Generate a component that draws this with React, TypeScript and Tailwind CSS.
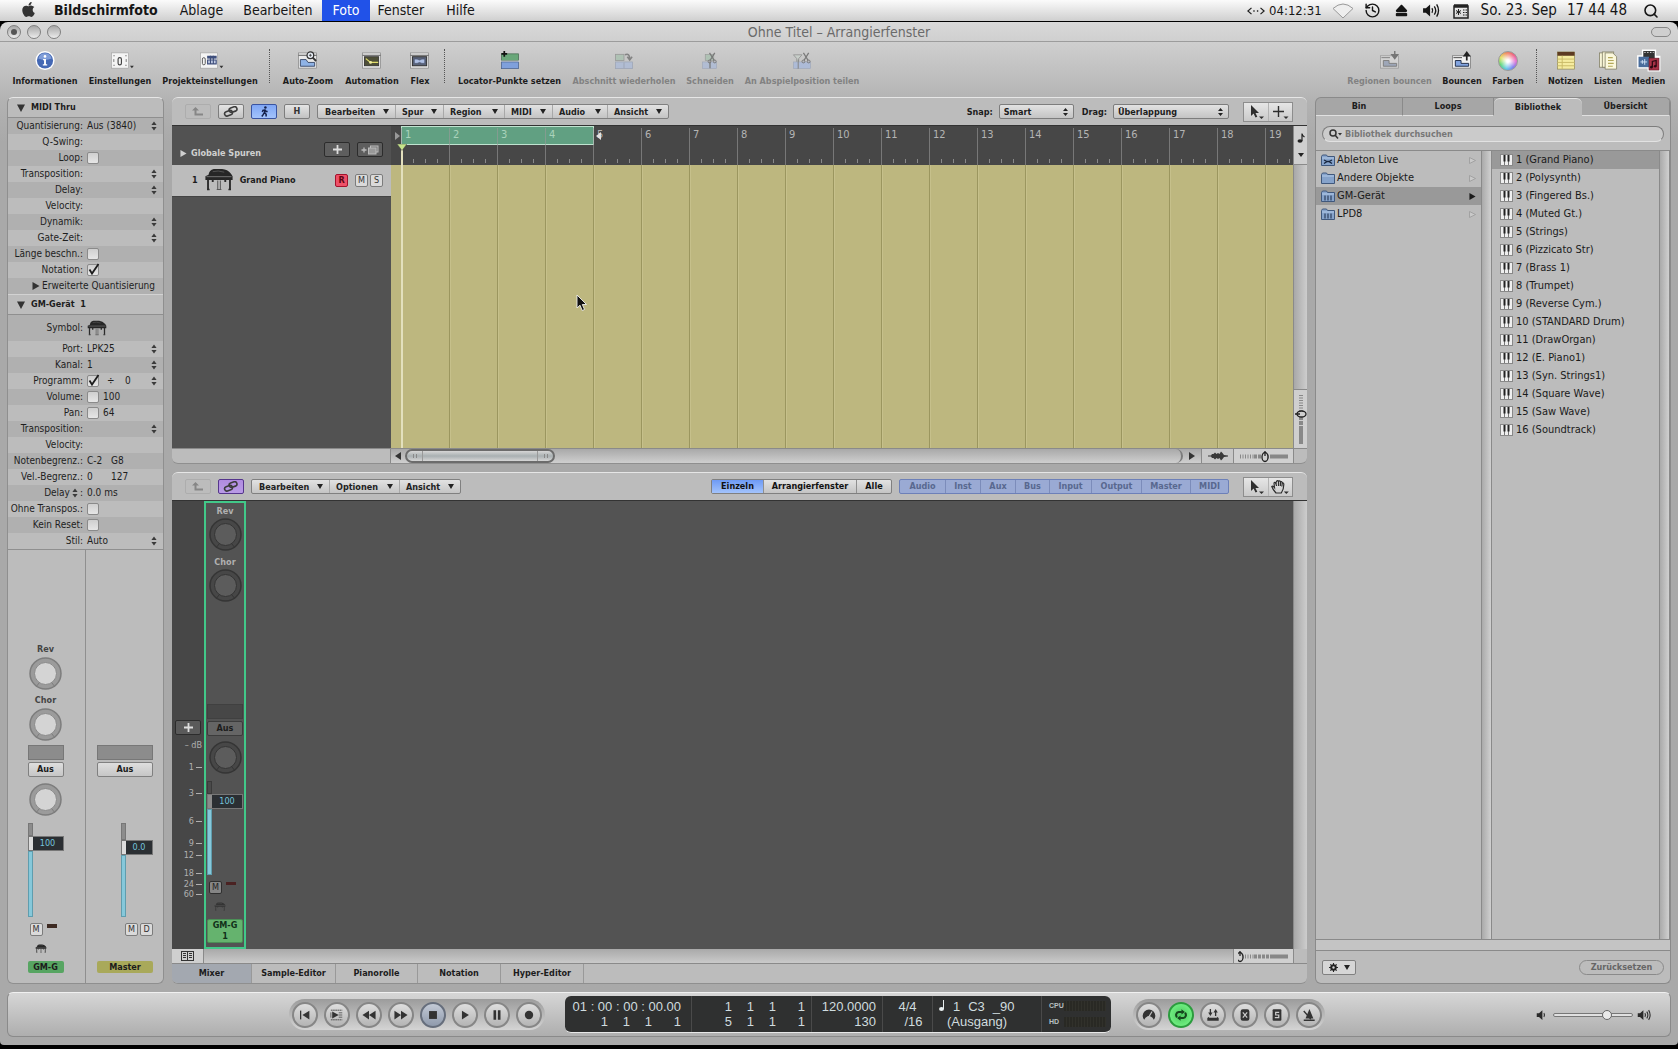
import React from 'react';
import { FaApple, FaEject } from 'react-icons/fa';
import { History, Search } from 'lucide-react';

/* ---------- small glyphs ---------- */

function Updown({ className = '' }: { className?: string }) {
  return (
    <svg viewBox="0 0 6 10" className={`h-2.5 w-1.5 shrink-0 ${className}`} fill="#3a3a3a" aria-hidden="true">
      <path d="M3 .5 5.600 4H.4zM3 9.500.4 6h5.200z" />
    </svg>
  );
}

function Piano({ className = '' }: { className?: string }) {
  return (
    <svg viewBox="0 0 28 22" className={`shrink-0 ${className}`} aria-hidden="true">
      <path d="M4 6.500Q4.500 2 9 1h8q5 .3 8.500 4.500L27 8v3.500H1V8z" fill="#262626" />
      <path d="M8 3.500q5-1.500 11 .5" stroke="#5a5a5a" strokeWidth=".8" fill="none" />
      <path d="M2 8.300h24" stroke="#777" strokeWidth=".9" />
      <path d="M3.500 11v9M24.500 11v9M8 11v2.500M20 11v2.500" stroke="#2b2b2b" strokeWidth="1.800" />
      <path d="M2.500 20.500h2.500M23 20.500h2.500" stroke="#2b2b2b" strokeWidth="1.500" />
      <path d="M12.800 12v8.500M15.300 12v8.500M11.800 20.500h4.500" stroke="#5a5a5a" strokeWidth="1" />
    </svg>
  );
}

function Triangle({ dir, className = '' }: { dir: 'down' | 'right'; className?: string }) {
  return (
    <svg viewBox="0 0 8 8" className={`size-2 shrink-0 ${className}`} fill="currentColor" aria-hidden="true">
      <path d={dir === 'down' ? 'M0 .5h8L4 8z' : 'M.5 0v8L7.500 4z'} />
    </svg>
  );
}

function Speaker({ waves, className = '' }: { waves: number; className?: string }) {
  return (
    <svg viewBox="0 0 20 16" className={`shrink-0 ${className}`} fill="none" stroke="currentColor" strokeWidth="1.400" aria-hidden="true">
      <path d="M1 5.500h3L8.500 1.500v13L4 10.500H1z" fill="currentColor" stroke="none" />
      <path d="M10.500 5.500q1.600 2.500 0 5" />
      {waves > 1 && <path d="M13 3.500q3 4.500 0 9" />}
      {waves > 2 && <path d="M15.500 1.500q4 6.500 0 13" />}
    </svg>
  );
}

function LinkGlyph() {
  return (
    <svg viewBox="0 0 16 11" className="h-[11px] w-4" fill="none" stroke="#3c3c3c" strokeWidth="1.600" aria-hidden="true">
      <rect x="6" y="1.300" width="8" height="4.500" rx="2.200" transform="rotate(-18 10 3.500)" />
      <rect x="1.500" y="5" width="8" height="4.500" rx="2.200" transform="rotate(-18 5.500 7.200)" />
    </svg>
  );
}

function UpGlyph() {
  return (
    <svg viewBox="0 0 12 9" className="h-[9px] w-3" fill="#868686" aria-hidden="true">
      <path d="M3.500 0 7 3.500H4.500V6.500H11V8.500H2.500V3.500H0z" />
    </svg>
  );
}

function Runner() {
  return (
    <svg viewBox="0 0 10 12" className="h-[11px] w-[9px]" fill="none" stroke="#14204a" strokeWidth="1.700" aria-hidden="true">
      <circle cx="6" cy="1.500" r="1.400" fill="#14204a" stroke="none" />
      <path d="M5.500 3.500 5 7l1.800 2v2.500M5 7 3.500 9.500 2 11.500M2.500 6.500l1-2h2.200L7 6h1.500" />
    </svg>
  );
}

function Pointer() {
  return (
    <svg viewBox="0 0 16 16" className="size-4" fill="#2e2e2e" aria-hidden="true">
      <path d="M3 1v11l2.600-2.400L7.500 13.500l1.800-.8L7.500 9H11z" />
      <path d="M11 12.500h5L13.500 15z" />
    </svg>
  );
}

function CrossTool() {
  return (
    <svg viewBox="0 0 18 16" className="h-4 w-[18px]" aria-hidden="true">
      <path d="M7.500 2v11M2 7.500h11" stroke="#2e2e2e" strokeWidth="1.400" />
      <path d="M12.500 12.500h5L15 15z" fill="#2e2e2e" />
    </svg>
  );
}

function HandTool() {
  return (
    <svg viewBox="0 0 18 16" className="h-4 w-[18px]" fill="none" stroke="#2e2e2e" strokeWidth="1.200" aria-hidden="true">
      <path d="M5 14Q1.500 10 .8 7.500q1-1 2.700 1.200L3 4q.8-1.400 1.800.2L5.500 2.500Q6.500.8 7.500 2.500q1-1.400 2 .3Q11 2 11.300 4q1.500-.5 1.500 1.500 0 5-2.500 8.500z" />
      <path d="M4.900 4l.6 3M7.500 2.500V7M9.500 3 9.300 7M11.300 4l-.5 3.500" />
      <path d="M12.800 12.500h5L15.300 15z" fill="#2e2e2e" stroke="none" />
    </svg>
  );
}

/* ---------- toolbar icons ---------- */

const Frame = ({ children }: { children?: React.ReactNode }) => (
  <>
    <rect x="1" y="2" width="19" height="16" fill="#e9e9e9" stroke="#8a8a8a" strokeWidth=".8" />
    <path d="M1 4.500h19" stroke="#555" />
    {children}
  </>
);

const toolbarIcons: Record<string, React.ReactNode> = {
  info: (
    <>
      <circle cx="11" cy="10" r="10" fill="#fff" />
      <circle cx="11" cy="10" r="8.500" fill="#4468b4" />
      <path d="M4 8a7.200 7.200 0 0 1 14 0q-7 3-14 0z" fill="#7f9dd8" />
      <circle cx="11" cy="5.700" r="1.400" fill="#fff" />
      <path d="M9 8.500h3v5.500h1.300v1.200H8.700V14H10V9.700H9z" fill="#fff" />
    </>
  ),
  settings: (
    <>
      <rect x="2" y="2" width="18" height="16" fill="#f4f4f4" stroke="#999" strokeWidth=".6" />
      <rect x="9" y="7" width="3.500" height="7.500" rx="1.700" fill="none" stroke="#444" strokeWidth="1.200" />
      <path d="M4 5h1.500M4 15h1.500M16.500 5H18M16.500 15H18M4.500 8.500v3M17.500 8.500v3" stroke="#777" />
      <path d="M21.500 15.500h4l-2 2.500z" fill="#333" />
    </>
  ),
  project: (
    <>
      <rect x="1" y="2" width="18" height="16" fill="#f4f4f4" stroke="#999" strokeWidth=".6" />
      <rect x="3" y="7" width="3" height="7.500" rx="1.500" fill="none" stroke="#555" />
      <path d="M8 5h10v3H8z" fill="#3f4f7c" />
      <path d="M8.500 9.500h9v4h-9zM11.500 5v9M14.500 5v9" stroke="#3f4f7c" strokeWidth="1.200" fill="#c3cde6" />
      <path d="M21 15.500h4L23 18z" fill="#333" />
    </>
  ),
  zoom: (
    <Frame>
      <path d="M3 16V9h6l2 3h7v4z" fill="#8fb3e6" stroke="#3c4c6c" />
      <circle cx="13.500" cy="4.500" r="3.500" fill="#e8eef6" stroke="#333" strokeWidth="1.300" />
      <path d="m16 7 3.500 3.500" stroke="#333" strokeWidth="2" />
      <path d="M12 4.500h3M13.500 3v3" stroke="#333" strokeWidth=".8" />
    </Frame>
  ),
  automation: (
    <Frame>
      <rect x="3" y="6" width="15" height="9.500" fill="#4e4f38" stroke="#2d2d2d" strokeWidth=".8" />
      <path d="m4.500 8 5 4h8" stroke="#e2df6a" fill="none" strokeWidth="1.300" />
      <circle cx="9.500" cy="12" r="1.500" fill="#f3f0a0" />
    </Frame>
  ),
  flex: (
    <Frame>
      <rect x="3" y="6" width="15" height="9.500" fill="#5a6379" stroke="#2d2d2d" strokeWidth="1" />
      <path d="M5 8.500h3l2.500 1 2.500-1h3v4.500h-3l-2.500-1-2.500 1H5z" fill="#aebfe3" stroke="#39435b" strokeWidth=".6" />
    </Frame>
  ),
  locator: (
    <>
      <rect x="2" y="3" width="18" height="7" fill="#69a779" stroke="#4b6f56" strokeWidth=".8" />
      <path d="M1 10.700h20" stroke="#eee" />
      <rect x="2" y="11.500" width="18" height="7" fill="#7fa0dc" stroke="#4d648f" strokeWidth=".8" />
      <path d="M5 0v6M2 3h6" stroke="#111" strokeWidth="1.800" />
    </>
  ),
  repeat: (
    <g opacity=".6">
      <rect x="2" y="3.500" width="9" height="6.500" fill="#9fbfa8" stroke="#777" strokeWidth=".8" />
      <rect x="2" y="11.500" width="18" height="7" fill="#a6b9de" stroke="#8592ac" strokeWidth=".8" />
      <path d="M11 12v6" stroke="#8592ac" />
      <path d="M12 4q5-2 5 4M14.500 6 17 9.500 19.500 6" fill="none" stroke="#555" strokeWidth="1.600" />
    </g>
  ),
  cut: (
    <g opacity=".6">
      <rect x="6" y="3.500" width="9" height="6.500" fill="#9fbfa8" stroke="#777" strokeWidth=".6" />
      <rect x="3" y="11.500" width="15" height="7" fill="#a6b9de" stroke="#8592ac" strokeWidth=".6" />
      <path d="m10.500 2 5 8M16 2l-5 8M11 11v7" stroke="#444" strokeWidth="1.300" />
      <circle cx="10.500" cy="11" r="1.500" fill="none" stroke="#444" />
      <circle cx="16" cy="11" r="1.500" fill="none" stroke="#444" />
    </g>
  ),
  split: (
    <g opacity=".6">
      <path d="M2 4h9L7.500 8v10h-2V8z" fill="#c9d4cc" stroke="#666" strokeWidth=".8" />
      <rect x="2" y="11.500" width="18" height="7" fill="#9fb6e4" stroke="#8592ac" strokeWidth=".6" />
      <path d="M7 9v9.500" stroke="#555" />
      <path d="m12.500 2 5 8M18 2l-5 8" stroke="#444" strokeWidth="1.300" />
      <circle cx="12.500" cy="11" r="1.500" fill="none" stroke="#444" />
      <circle cx="18" cy="11" r="1.500" fill="none" stroke="#444" />
    </g>
  ),
  bounceRegion: (
    <g opacity=".55">
      <rect x="1" y="5" width="19" height="13" fill="#ddd" stroke="#777" strokeWidth=".8" />
      <path d="M2 7h9" stroke="#444" />
      <path d="M4 16v-6h6v3h8v3z" fill="#7f8fae" stroke="#444" />
      <path d="M16 0v6M13 4l3 4 3-4z" stroke="#333" strokeWidth="1.500" fill="#333" />
    </g>
  ),
  bounce: (
    <>
      <rect x="1" y="5" width="19" height="13" fill="#f0f0f0" stroke="#777" strokeWidth=".8" />
      <path d="M2 7h9" stroke="#444" />
      <path d="M4 16v-6h6v3h8v3z" fill="#82a4e0" stroke="#1f2c49" />
      <path d="M16 4v6M13.500 5 16 1.500 18.500 5z" stroke="#222" strokeWidth="1.800" fill="#222" />
    </>
  ),
  notes: (
    <>
      <rect x="2" y="1" width="18" height="18" fill="#f5eca0" stroke="#8b8452" strokeWidth=".7" />
      <rect x="2" y="1" width="18" height="4" fill="#5d3b22" />
      <path d="M2 8.500h18M2 12h18M2 15.500h18M7 5v14" stroke="#c9bb67" />
    </>
  ),
  lists: (
    <>
      <rect x="2" y="2" width="12" height="15" fill="#f7f4d6" stroke="#7e7b62" strokeWidth=".8" />
      <rect x="5" y="1" width="12" height="16" fill="#f7f4d6" stroke="#7e7b62" strokeWidth=".8" />
      <path d="M8 2h8l4 4v13H8z" fill="#fbf8dc" stroke="#7e7b62" strokeWidth=".8" />
      <path d="M11 7h5M11 10h6M11 13h6M11 16h5" stroke="#b3a85a" strokeWidth="1.200" />
    </>
  ),
  media: (
    <>
      <path d="M3.500-1.500h15V5H23v16.500H9.500V18.500H-1.500V4.500h5z" fill="#fff" />
      <rect x="5" y="0" width="12" height="8" fill="#333" />
      <path d="M6 1.500h10" stroke="#ddd" strokeDasharray="1.500 1.500" />
      <rect x="0" y="6" width="11" height="11" fill="#4a6d9c" />
      <path d="M2 11.500h7M4 9.500v4M6.500 8.500v6" stroke="#cfe0f5" />
      <rect x="11" y="7.500" width="10.500" height="12.500" fill="#a83246" stroke="#5c1522" strokeWidth=".6" />
      <path d="M14.500 17v-6l4-1v6" stroke="#2a0a12" fill="none" strokeWidth="1.300" />
      <circle cx="13.500" cy="17" r="1.400" fill="#2a0a12" />
      <circle cx="17.500" cy="16" r="1.400" fill="#2a0a12" />
    </>
  ),
};

type Tool = { icon: string; label: string; w: string; off?: boolean };

const toolsLeft: (Tool | string)[] = [
  { icon: 'info', label: 'Informationen', w: 'w-[76px]' },
  { icon: 'settings', label: 'Einstellungen', w: 'w-[74px]' },
  { icon: 'project', label: 'Projekteinstellungen', w: 'w-[106px]' },
  'w-[13px]',
  { icon: 'zoom', label: 'Auto-Zoom', w: 'w-16' },
  { icon: 'automation', label: 'Automation', w: 'w-16' },
  { icon: 'flex', label: 'Flex', w: 'w-8' },
  'w-4',
  { icon: 'locator', label: 'Locator-Punkte setzen', w: 'w-[115px]' },
  { icon: 'repeat', label: 'Abschnitt wiederholen', w: 'w-[114px]', off: true },
  { icon: 'cut', label: 'Schneiden', w: 'w-[58px]', off: true },
  { icon: 'split', label: 'An Abspielposition teilen', w: 'w-[126px]', off: true },
];

const toolsRight: (Tool | string)[] = [
  { icon: 'bounceRegion', label: 'Regionen bouncen', w: 'w-[97px]', off: true },
  { icon: 'bounce', label: 'Bouncen', w: 'w-12' },
  { icon: 'colors', label: 'Farben', w: 'w-11' },
  'w-3',
  { icon: 'notes', label: 'Notizen', w: 'w-[47px]' },
  { icon: 'lists', label: 'Listen', w: 'w-[38px]' },
  { icon: 'media', label: 'Medien', w: 'w-[43px]' },
];

function ToolGroup({ items }: { items: (Tool | string)[] }) {
  return (
    <div className="flex">
      {items.map((t, i) =>
        typeof t === 'string' ? (
          <div key={i} className={`${t} flex justify-center`}>
            <div className="h-[34px] border-l border-dotted border-[#555]" />
          </div>
        ) : (
          <button
            key={t.label}
            type="button"
            disabled={t.off}
            className={`${t.w} flex flex-col items-center gap-1 pt-0.5 text-[9px] leading-3 font-bold whitespace-nowrap ${t.off ? 'text-[#828282]' : 'text-[#1c1c1c]'}`}
          >
            {t.icon === 'colors' ? (
              <span className="size-5 rounded-full border border-[#999] bg-[radial-gradient(circle,#fff_10%,transparent_65%),conic-gradient(from_90deg,#e66fd0,#7c7df0,#5fc8e8,#62d87c,#e2e266,#f08b5e,#f0627e,#e66fd0)]" />
            ) : (
              <svg viewBox="0 0 22 21" className="h-5 w-[22px] overflow-visible" aria-hidden="true">
                {toolbarIcons[t.icon]}
              </svg>
            )}
            {t.label}
          </button>
        ),
      )}
    </div>
  );
}

/* ---------- shared controls ---------- */

function MenuStrip({ label, items }: { label: string; items: [string, string][] }) {
  return (
    <div role="menubar" aria-label={label} className="flex h-[15px] rounded-xs border border-[#808080] bg-linear-to-b from-[#e2e2e2] to-[#c4c4c4]">
      {items.map(([t, w], i) => (
        <button
          key={t}
          type="button"
          className={`${w} flex items-center justify-between pr-1.5 text-[9px] leading-3 font-bold text-[#222] ${i ? 'border-l border-[#a8a8a8] pl-1.5' : 'pl-[7px]'}`}
        >
          {t}
          <svg viewBox="0 0 6 5" className="h-[5px] w-1.5" fill="#222" aria-hidden="true">
            <path d="M0 0h6L3 5z" />
          </svg>
        </button>
      ))}
    </div>
  );
}

function SmallButton({ label, tone = 'plain', children }: { label: string; tone?: 'plain' | 'off' | 'blue' | 'violet'; children: React.ReactNode }) {
  const tones = {
    plain: 'border-[#7d7d7d] bg-linear-to-b from-[#e4e4e4] to-[#c2c2c2]',
    off: 'border-[#adadad]',
    blue: 'border-[#3a54a0] bg-linear-to-b from-[#7fa6f5] to-[#a3c3fb]',
    violet: 'border-[#55358c] bg-linear-to-b from-[#b08be0] to-[#b99be6]',
  };
  return (
    <button type="button" aria-label={label} className={`flex h-[15px] w-[26px] items-center justify-center rounded-xs border text-[9px] font-bold text-[#333] ${tones[tone]}`}>
      {children}
    </button>
  );
}

function HeaderSelect({ id, label, value, width }: { id: string; label: string; value: string; width: string }) {
  return (
    <div className="flex items-center gap-1.5">
      <label htmlFor={id} className="text-[9px] leading-3 font-bold text-[#1c1c1c]">{label}</label>
      <div className={`relative ${width}`}>
        <select id={id} className="block h-[15px] w-full appearance-none rounded-xs border border-[#7d7d7d] bg-linear-to-b from-[#e2e2e2] to-[#c4c4c4] pl-1 text-[9px] leading-3 font-bold text-[#1c1c1c]">
          <option>{value}</option>
        </select>
        <svg viewBox="0 0 5 8" className="pointer-events-none absolute top-1 right-1.5 h-2 w-[5px]" fill="#222" aria-hidden="true">
          <path d="M2.500 0 5 3H0zM2.500 8 0 5h5z" />
        </svg>
      </div>
    </div>
  );
}

function ToolPair({ second }: { second: 'cross' | 'hand' }) {
  return (
    <div className="flex h-5 w-[50px] border border-[#8d8d8d] bg-linear-to-b from-[#e6e6e6] to-[#c9c9c9]">
      <button type="button" aria-label="Zeigerwerkzeug" className="flex flex-1 items-center justify-center border-r border-[#b3b3b3]"><Pointer /></button>
      <button type="button" aria-label="Zweites Werkzeug" className="flex flex-1 items-center justify-center">
        {second === 'cross' ? <CrossTool /> : <HandTool />}
      </button>
    </div>
  );
}

function Check({ id, checked = false }: { id: string; checked?: boolean }) {
  return (
    <span className="relative block size-3 shrink-0">
      <input id={id} type="checkbox" defaultChecked={checked} className="peer block size-3 appearance-none rounded-xs border border-[#8a8a8a] bg-linear-to-b from-[#cfcfcf] to-[#e6e6e6]" />
      <svg viewBox="0 0 12 12" className="pointer-events-none absolute inset-0 hidden size-3 overflow-visible peer-checked:block" fill="none" stroke="#1c1c1c" strokeWidth="1.800" aria-hidden="true">
        <path d="m2.500 5.500 2.500 4L11.500 0" />
      </svg>
    </span>
  );
}

/* ---------- inspector ---------- */

type Param = { label: string; value?: string; second?: string; check?: boolean; spin?: boolean; tall?: boolean; labelSpin?: boolean };

const midiParams: Param[] = [
  { label: 'Quantisierung', value: 'Aus (3840)', spin: true },
  { label: 'Q-Swing' },
  { label: 'Loop', check: false },
  { label: 'Transposition', spin: true },
  { label: 'Delay', spin: true },
  { label: 'Velocity' },
  { label: 'Dynamik', spin: true },
  { label: 'Gate-Zeit', spin: true },
  { label: 'Länge beschn.', check: false },
  { label: 'Notation', check: true },
];

const deviceParams: Param[] = [
  { label: 'Symbol', tall: true },
  { label: 'Port', value: 'LPK25', spin: true },
  { label: 'Kanal', value: '1', spin: true },
  { label: 'Programm', check: true, value: '÷', second: '0', spin: true },
  { label: 'Volume', check: false, value: '100' },
  { label: 'Pan', check: false, value: '64' },
  { label: 'Transposition', spin: true },
  { label: 'Velocity' },
  { label: 'Notenbegrenz.', value: 'C-2', second: 'G8' },
  { label: 'Vel.-Begrenz.', value: '0', second: '127' },
  { label: 'Delay', value: '0.0 ms', labelSpin: true },
  { label: 'Ohne Transpos.', check: false },
  { label: 'Kein Reset', check: false },
  { label: 'Stil', value: 'Auto', spin: true },
];

function ParamRows({ rows, group }: { rows: Param[]; group: string }) {
  return (
    <>
      {rows.map((r, i) => {
        const id = `${group}-${i}`;
        return (
          <div key={id} className={`flex items-center gap-1 pr-1.5 text-[10px] leading-4 text-[#1e1e1e] ${r.tall ? 'h-[26px]' : 'h-4'} ${i % 2 ? '' : 'bg-[#b0b0b0]'}`}>
            <label htmlFor={id} className="flex w-[75px] shrink-0 items-center justify-end whitespace-nowrap">
              {r.label}
              {r.labelSpin && <Updown className="mx-0.5" />}:
            </label>
            {r.check !== undefined && <Check id={id} checked={r.check} />}
            {r.tall && <Piano className="h-4 w-5" />}
            {r.value && <span className={r.second ? (r.check !== undefined ? 'w-[18px] pl-1' : 'w-5') : ''}>{r.value}</span>}
            {r.second && <span>{r.second}</span>}
            {r.spin && <Updown className="ml-auto" />}
          </div>
        );
      })}
    </>
  );
}

function Knob({ dark = false, label }: { dark?: boolean; label: string }) {
  return (
    <div className="relative size-[33px] shrink-0">
      <svg viewBox="0 0 33 33" className="size-full" aria-hidden="true">
        <circle cx="16.500" cy="16.500" r="15.500" fill={dark ? '#474747' : '#9b9b9b'} stroke={dark ? '#353535' : '#7d7d7d'} strokeWidth="1.500" />
        <path d="m10 26-3 4M23 26l3 4" stroke={dark ? '#353535' : '#7d7d7d'} />
        <circle cx="16.500" cy="16.500" r="11" fill={dark ? '#5c5c5c' : '#d4d4d4'} stroke={dark ? '#353535' : '#8a8a8a'} />
      </svg>
      <input type="range" aria-label={label} className="absolute inset-0 size-full opacity-0" />
    </div>
  );
}

function Fader({ value, dark = false, width, low = false }: { value: string; dark?: boolean; width: string; low?: boolean }) {
  return (
    <div className={`relative flex h-[94px] flex-col ${width}`}>
      <div className={`w-[5px] border ${low ? 'h-[17px]' : 'h-[13px]'} ${dark ? 'border-[#3a3a3a] bg-[#4a4a4a]' : 'border-[#777] bg-[#8c8c8c]'}`} />
      <div className={`flex h-[15px] items-stretch border ${dark ? 'border-[#777] bg-[#8b8b8b]' : 'border-[#777] bg-[#dcdcdc]'}`}>
        <div className="w-1" />
        <output className="flex-1 bg-[#2b2f33] text-center text-[9px] leading-[13px] text-[#74c3dc]">{value}</output>
      </div>
      <div className="w-[5px] flex-1 border border-[#5f9dae] bg-[#86c8da]" />
      <input type="range" aria-label={`Pegel ${value}`} className="absolute inset-0 size-full opacity-0" />
    </div>
  );
}

const stripBtn = 'h-[15px] w-full shrink-0 rounded-xs border text-[9px] leading-[13px] font-bold';
const lightBtn = 'border-[#808080] bg-linear-to-b from-[#dedede] to-[#c6c6c6] text-[#1c1c1c]';
const msBtn = 'size-[13px] rounded-xs border border-[#7c7c7c] bg-[#dadada] text-[9px] leading-[11px] font-normal text-[#333]';

function Inspector() {
  return (
    <aside className="flex w-[157px] shrink-0 flex-col overflow-hidden rounded-md border border-[#8f8f8f] border-t-[#e6e6e6] bg-[#bcbcbc]">
      <button type="button" className="flex h-5 items-center gap-1.5 border-b border-[#8f8f8f] pl-[9px] text-[9px] font-bold text-[#1c1c1c]">
        <Triangle dir="down" className="text-[#333]" />MIDI Thru
      </button>
      <ParamRows rows={midiParams} group="midi" />
      <button type="button" className="flex h-4 items-center gap-0.5 bg-[#b0b0b0] pl-6 text-[10px] leading-4 whitespace-nowrap text-[#1e1e1e]">
        <Triangle dir="right" className="text-[#333]" />Erweiterte Quantisierung
      </button>
      <button type="button" className="flex h-[21px] items-center gap-1.5 border-t border-b border-t-[#d2d2d2] border-b-[#8f8f8f] pl-[9px] text-[9px] font-bold whitespace-pre text-[#1c1c1c]">
        <Triangle dir="down" className="text-[#333]" />GM-Gerät  1
      </button>
      <ParamRows rows={deviceParams} group="device" />
      <div className="flex flex-1 border-t border-[#8f8f8f] text-[#1c1c1c]">
        <div className="flex w-[78px] flex-col items-center justify-end border-r border-[#8f8f8f] pr-0.5 pb-2.5">
          <span className="text-[9px] leading-4 font-bold text-[#444]">Rev</span>
          <Knob label="Rev" />
          <span className="mt-0.5 text-[9px] leading-4 font-bold text-[#444]">Chor</span>
          <Knob label="Chor" />
          <div className="mt-1 flex w-9 flex-col items-center">
            <div className="h-[15px] w-full border border-[#777] bg-[#8c8c8c]" />
            <button type="button" className={`${stripBtn} ${lightBtn} mt-0.5 mb-1.5`}>Aus</button>
            <Knob label="Pan" />
            <div className="mt-[7px]"><Fader value="100" width="w-9" /></div>
            <div className="mt-1.5 flex w-full gap-1 pl-0.5">
              <button type="button" className={msBtn}>M</button>
              <div className="mt-px h-1 w-2.5 bg-[#3d2a22]" />
            </div>
            <Piano className="my-2 ml-1.5 h-[9px] w-3.5 self-start" />
            <span className="h-3 w-full rounded-xs bg-[#57a562] text-center text-[9px] leading-3 font-bold">GM-G</span>
          </div>
        </div>
        <div className="flex flex-1 flex-col justify-end pr-2.5 pb-2.5 pl-[11px]">
          <div className="h-[15px] w-full border border-[#777] bg-[#8c8c8c]" />
          <button type="button" className={`${stripBtn} ${lightBtn} mt-0.5 mb-[46px]`}>Aus</button>
          <div className="self-end"><Fader value="0.0" width="w-8" low /></div>
          <div className="mt-1.5 flex justify-end gap-0.5">
            <button type="button" className={msBtn}>M</button>
            <button type="button" className={msBtn}>D</button>
          </div>
          <span className="mt-[25px] h-3 w-full rounded-xs bg-[#a9a95a] text-center text-[9px] leading-3 font-bold">Master</span>
        </div>
      </div>
    </aside>
  );
}

/* ---------- arrange ---------- */

const bars = Array.from({ length: 60 }, (_, i) => i + 1);
const songEnd = 19;

function ZoomSlider({ label, low = false }: { label: string; low?: boolean }) {
  return (
    <div className="relative flex h-full w-[60px] items-center justify-center border-l border-[#8a8a8a] bg-[#d0d0d0]">
      <svg viewBox="0 0 52 13" className="h-[13px] w-[52px]" aria-hidden="true">
        <path d="M2 6.500h14" stroke="#888" strokeWidth="4" strokeDasharray="1 1.500" />
        <path d="M16 6.500h18" stroke="#888" strokeWidth="4" strokeDasharray="3 1" />
        <path d="M34 6.500h16" stroke="#888" strokeWidth="4" />
        <ellipse cx={low ? 2 : 27} cy="7" rx="3" ry="4.500" fill="#d0d0d0" stroke="#222" strokeWidth="1.300" />
        <path d={low ? 'M2 1v5' : 'M27 1v5'} stroke="#222" strokeWidth="1.300" />
      </svg>
      <input type="range" aria-label={label} className="absolute inset-0 size-full opacity-0" />
    </div>
  );
}

function Arrange() {
  return (
    <section aria-label="Arrangierbereich" className="flex min-h-0 flex-[367] flex-col overflow-hidden rounded-md border-t border-b border-[#8f8f8f] border-t-[#e6e6e6] bg-[#bcbcbc]">
      <div className="flex h-[27px] shrink-0 items-center pr-3.5 pl-[13px]">
        <div className="flex gap-[7px]">
          <SmallButton label="Ebene höher" tone="off"><UpGlyph /></SmallButton>
          <SmallButton label="Link"><LinkGlyph /></SmallButton>
          <SmallButton label="Catch" tone="blue"><Runner /></SmallButton>
          <SmallButton label="Hyper Draw">H</SmallButton>
        </div>
        <div className="ml-[7px]">
          <MenuStrip
            label="Arrangiermenü"
            items={[['Bearbeiten', 'w-[77px]'], ['Spur', 'w-12'], ['Region', 'w-[61px]'], ['MIDI', 'w-12'], ['Audio', 'w-[55px]'], ['Ansicht', 'w-[61px]']]}
          />
        </div>
        <div className="ml-auto flex items-center">
          <HeaderSelect id="snap" label="Snap:" value="Smart" width="w-[75px]" />
          <div className="ml-2"><HeaderSelect id="drag" label="Drag:" value="Überlappung" width="w-[116px]" /></div>
          <div className="ml-3.5"><ToolPair second="cross" /></div>
        </div>
      </div>

      <div className="flex min-h-0 flex-1 border-t border-[#333]">
        <div className="flex w-[219px] shrink-0 flex-col bg-[#525252]">
          <div className="flex h-[39px] items-center pr-1.5 pl-2">
            <button type="button" className="mt-4 flex items-center gap-1 text-[9px] font-bold text-[#d0d0d0]">
              <Triangle dir="right" className="size-[7px]" />Globale Spuren
            </button>
            <div className="mt-2 mr-0.5 ml-auto flex gap-[7px]">
              <button type="button" aria-label="Spur hinzufügen" className="flex h-[15px] w-[26px] items-center justify-center rounded-xs border border-[#2c2c2c] bg-[#5e5e5e]">
                <svg viewBox="0 0 9 9" className="size-[9px]" aria-hidden="true"><path d="M4.500 0v9M0 4.500h9" stroke="#ddd" strokeWidth="1.800" /></svg>
              </button>
              <button type="button" aria-label="Spur duplizieren" className="flex h-[15px] w-[26px] items-center justify-center rounded-xs border border-[#2c2c2c] bg-[#5e5e5e]">
                <svg viewBox="0 0 18 10" className="h-2.5 w-[18px]" aria-hidden="true">
                  <path d="M3 2.500v5M.5 5h5" stroke="#bbb" strokeWidth="1.300" />
                  <rect x="9.500" y="1" width="7.500" height="6" fill="#777" stroke="#bbb" />
                  <rect x="7.500" y="3" width="7.500" height="6" fill="#999" stroke="#bbb" />
                </svg>
              </button>
            </div>
          </div>
          <div className="flex h-8 items-center border-b border-[#444] bg-[#bcbcbc] pr-2 pl-5 text-[9px] font-bold text-[#1c1c1c]">
            <span>1</span>
            <Piano className="mb-0.5 ml-1.5 h-[23px] w-[30px]" />
            <span className="ml-1.5">Grand Piano</span>
            <button type="button" aria-label="Aufnahme" className="ml-auto size-[13px] rounded-xs border border-[#a3122c] bg-[#ee5068] text-[9px] leading-[11px] text-[#5c0512]">R</button>
            <div className="ml-[7px] flex gap-0.5">
              <button type="button" aria-label="Mute" className={msBtn}>M</button>
              <button type="button" aria-label="Solo" className={msBtn}>S</button>
            </div>
          </div>
        </div>

        <div className="relative flex min-w-0 flex-1 flex-col overflow-hidden">
          <div className="relative flex h-[39px] shrink-0 overflow-hidden bg-[#474747] pl-2.5">
            <div className="absolute top-0 left-2.5 h-[19px] w-[193px] border border-[#bfe3cf] bg-[#61a082]" />
            {bars.map((b) => (
              <div key={b} className="relative mt-0.5 flex w-12 shrink-0 flex-col justify-between border-l border-[#9a9a9a]/60 pl-[3px]">
                <span className={`text-[11px] leading-[14px] ${b < 5 ? 'text-[#a9d3bb]' : 'text-[#b4b4b4]'}`}>{b <= songEnd ? b : ''}</span>
                <div className="-ml-[3px] flex h-1.5 justify-evenly pb-0.5">
                  <i className="w-px bg-[#8a8a8a]" /><i className="w-px bg-[#8a8a8a]" /><i className="w-px bg-[#8a8a8a]" />
                </div>
              </div>
            ))}
            <svg viewBox="0 0 6 8" className="absolute top-1.5 left-1 h-2 w-1.5" fill="#999" aria-hidden="true"><path d="M0 0v8l5-4z" /></svg>
            <svg viewBox="0 0 6 8" className="absolute top-1.5 left-[205px] h-2 w-1.5" fill="#e3e3e3" aria-hidden="true"><path d="M5 0v8L0 4z" /></svg>
          </div>
          <div className="flex flex-1 overflow-hidden bg-[#bdb77f] pl-2.5">
            {bars.map((b) => (
              <div key={b} className="w-12 shrink-0 border-l border-[#9b965f] shadow-[inset_1px_0_0_#c6c08b]" />
            ))}
          </div>
          <div className="absolute top-5 bottom-0 left-2.5 w-0.5 bg-[#e3e0bd]" />
          <svg viewBox="0 0 10 7" className="absolute top-[18px] left-1.5 h-[7px] w-2.5" aria-hidden="true"><path d="M0 0h10L5 6.500z" fill="#c6e58a" stroke="#444" strokeWidth=".5" /></svg>
          <svg viewBox="0 0 12 18" className="absolute top-[168px] left-[185px] h-[18px] w-3" aria-hidden="true">
            <path d="M1 1v13l3-2.800L6.200 16.500l2.300-1L6.300 10.500H10.500z" fill="#111" stroke="#eee" strokeWidth=".9" />
          </svg>
        </div>

        <div className="flex w-3.5 shrink-0 flex-col border-l border-[#8a8a8a] bg-linear-to-r from-[#a8a8a8] to-[#cdcdcd]">
          <div className="flex h-[39px] flex-col items-center justify-center gap-2.5 border-b border-[#8a8a8a] bg-[#cfcfcf]">
            <svg viewBox="0 0 8 10" className="h-2.5 w-2" aria-hidden="true"><ellipse cx="3" cy="8" rx="2.500" ry="1.800" fill="#222" /><path d="M5 8V.5q.3 2 2.500 3.500" stroke="#222" fill="none" strokeWidth="1.200" /></svg>
            <svg viewBox="0 0 6 4" className="h-1 w-1.5" fill="#222" aria-hidden="true"><path d="M0 0h6L3 4z" /></svg>
          </div>
          <div className="relative mt-auto flex h-[59px] justify-center border-t border-[#8a8a8a] bg-[#cfcfcf] py-1">
            <svg viewBox="0 0 12 50" className="h-full w-3" aria-hidden="true">
              <path d="M6 1v16" stroke="#888" strokeWidth="4" strokeDasharray="1 1.500" />
              <path d="M6 17v16" stroke="#888" strokeWidth="4" strokeDasharray="4 1" />
              <path d="M6 33v17" stroke="#888" strokeWidth="4" />
              <ellipse cx="6.500" cy="20" rx="4.500" ry="3" fill="#cfcfcf" stroke="#222" strokeWidth="1.300" />
              <path d="M0 20h5" stroke="#222" strokeWidth="1.300" />
            </svg>
            <input type="range" aria-label="Vertikaler Zoom" className="absolute inset-0 size-full opacity-0" />
          </div>
        </div>
      </div>

      <div className="flex h-[15px] shrink-0 border-t border-[#8a8a8a]">
        <div className="w-[219px] shrink-0 border-r border-[#8a8a8a]" />
        <div className="flex flex-1 items-center bg-linear-to-b from-[#a9a9a9] to-[#cfcfcf]">
          <svg viewBox="0 0 6 8" className="mx-1 h-2 w-1.5" fill="#333" aria-hidden="true"><path d="M6 0v8L0 4z" /></svg>
          <div className="flex h-3.5 w-[150px] items-center justify-between rounded-full border-2 border-[#6c6c6c] bg-linear-to-b from-[#d6d6d6] via-[#a9b0b2] to-[#d6d6d6]">
            <i className="flex h-full w-4 items-center justify-center border-r border-[#999]"><i className="h-1 w-1 border-x border-[#888]" /></i>
            <i className="flex h-full w-4 items-center justify-center border-l border-[#999]"><i className="h-1 w-1 border-x border-[#888]" /></i>
          </div>
          <div className="ml-auto h-full w-2 rounded-r-full border-r-2 border-[#7c7c7c]" />
          <svg viewBox="0 0 6 8" className="mx-1.5 h-2 w-1.5" fill="#333" aria-hidden="true"><path d="M0 0v8l6-4z" /></svg>
        </div>
        <button type="button" aria-label="Wellenform-Zoom" className="flex w-8 items-center justify-center border-l border-[#8a8a8a] bg-[#c8c8c8]">
          <svg viewBox="0 0 20 10" className="h-2.5 w-5" fill="#3a3a3a" aria-hidden="true"><path d="M0 4.500h3l1-1.500h1.500L7 1.500 8.500 3 10 2l1.500 1L13 .5 14.500 2 16 4l4 .5v1L16 6l-1.500 2L13 9.500 11.500 7 10 8 8.500 7 7 8.500 5.500 7H4L3 5.500H0z" /></svg>
        </button>
        <ZoomSlider label="Horizontaler Zoom" />
        <div className="w-3.5 border-l border-[#8a8a8a]" />
      </div>
    </section>
  );
}

/* ---------- mixer ---------- */

const scaleRows: [string, string][] = [
  ['– dB', 'h-[22px]'], ['1', 'h-[26px]'], ['3', 'h-7'], ['6', 'h-[22px]'], ['9', 'h-3'],
  ['12', 'h-[18px]'], ['18', 'h-[11px]'], ['24', 'h-[10px]'], ['60', 'h-[59px]'],
];

const filters: [string, string][] = [
  ['Audio', 'w-[45px]'], ['Inst', 'w-[35px]'], ['Aux', 'w-[35px]'], ['Bus', 'w-[34px]'],
  ['Input', 'w-[42px]'], ['Output', 'w-[50px]'], ['Master', 'w-[49px]'], ['MIDI', 'w-[38px]'],
];

const editorTabs: [string, string][] = [
  ['Mixer', 'w-20'], ['Sample-Editor', 'w-[84px]'], ['Pianorolle', 'w-[82px]'], ['Notation', 'w-[83px]'], ['Hyper-Editor', 'w-[83px]'],
];

function Mixer() {
  return (
    <section aria-label="Mixer" className="flex min-h-0 flex-[512] flex-col overflow-hidden rounded-md border-t border-b border-[#8f8f8f] border-t-[#e6e6e6] bg-[#bcbcbc]">
      <div className="flex h-[27px] shrink-0 items-center pr-3.5 pl-[13px]">
        <div className="flex gap-[7px]">
          <SmallButton label="Ebene höher" tone="off"><UpGlyph /></SmallButton>
          <SmallButton label="Link" tone="violet"><LinkGlyph /></SmallButton>
        </div>
        <div className="ml-[7px]">
          <MenuStrip label="Mixermenü" items={[['Bearbeiten', 'w-[77px]'], ['Optionen', 'w-[70px]'], ['Ansicht', 'w-[61px]']]} />
        </div>
        <div className="ml-auto flex items-center">
          <div className="flex h-[15px] rounded-xs border border-[#808080] bg-linear-to-b from-[#e2e2e2] to-[#c4c4c4] text-[9px] leading-[13px] font-bold text-[#111]">
            <button type="button" aria-pressed="true" className="w-[51px] bg-linear-to-b from-[#6e9af5] to-[#a3c3fb]">Einzeln</button>
            <button type="button" className="w-[94px] border-x border-[#8f8f8f]">Arrangierfenster</button>
            <button type="button" className="w-[34px]">Alle</button>
          </div>
          <div className="ml-[7px] flex h-[15px] rounded-xs border border-[#6d80b8] bg-[#9aaad4] text-[9px] leading-[13px] font-bold text-[#58688f]">
            {filters.map(([t, w], i) => (
              <button key={t} type="button" className={`${w} ${i ? 'border-l border-[#7c8cba]' : ''}`}>{t}</button>
            ))}
          </div>
          <div className="ml-3.5"><ToolPair second="hand" /></div>
        </div>
      </div>

      <div className="flex min-h-0 flex-1 border-t border-[#333]">
        <div className="flex w-8 shrink-0 flex-col justify-end bg-[#474747] pl-[3px]">
          <button type="button" aria-label="Kanal hinzufügen" className="mb-1.5 flex h-[15px] w-[26px] shrink-0 items-center justify-center rounded-xs border border-[#2c2c2c] bg-[#5a5a5a]">
            <svg viewBox="0 0 9 9" className="size-[9px]" aria-hidden="true"><path d="M4.500 0v9M0 4.500h9" stroke="#ddd" strokeWidth="1.800" /></svg>
          </button>
          {scaleRows.map(([t, h]) => (
            <div key={t} className={`flex shrink-0 items-start justify-end gap-0.5 pr-0.5 text-[9px] leading-[9px] text-[#b0b0b0] ${h}`}>
              {t}
              {t !== '– dB' && <i className="mt-1 h-px w-1.5 bg-[#b0b0b0]" />}
            </div>
          ))}
        </div>

        <div className="flex w-[42px] shrink-0 flex-col items-center overflow-hidden border-2 border-[#42c889] bg-[#535353]">
          <span className="mt-px text-[9px] leading-[14px] font-bold text-[#b0b0b0]">Rev</span>
          <Knob dark label="Rev" />
          <span className="mt-1 text-[9px] leading-[14px] font-bold text-[#b0b0b0]">Chor</span>
          <Knob dark label="Chor" />
          <div className="mt-auto h-[15px] w-9 border border-[#404040] bg-[#474747]" />
          <div className="mt-0.5 flex w-9 flex-col items-center">
            <button type="button" className={`${stripBtn} mb-[5px] border-[#3c3c3c] bg-[#656565] text-[#1c1c1c]`}>Aus</button>
            <Knob dark label="Pan" />
            <div className="mt-[7px]"><Fader value="100" width="w-9" dark /></div>
            <div className="mt-1.5 flex w-full gap-1 pl-0.5">
              <button type="button" className="size-[13px] rounded-xs border border-[#2f2f2f] bg-[#858585] text-[9px] leading-[11px] text-[#222]">M</button>
              <div className="mt-px h-[3px] w-2.5 bg-[#4a2222]" />
            </div>
            <Piano className="my-2 ml-1.5 h-[9px] w-3.5 self-start opacity-70" />
            <span className="mb-1 w-full rounded-xs border border-[#4b8f56] bg-[#65b36e] text-center text-[9px] leading-[11px] font-bold text-[#12301a]">GM-G<br />1</span>
          </div>
        </div>
        <div className="flex-1 bg-[#535353]" />
        <div className="w-3.5 shrink-0 border-l border-[#8a8a8a] bg-linear-to-r from-[#a8a8a8] to-[#cdcdcd]" />
      </div>

      <div className="flex h-[15px] shrink-0 border-b border-[#8a8a8a] bg-linear-to-b from-[#a9a9a9] to-[#cacaca]">
        <button type="button" aria-label="Listenansicht" className="flex w-8 items-center justify-center border-r border-[#8a8a8a] bg-[#cfcfcf]">
          <svg viewBox="0 0 13 10" className="h-2.5 w-[13px]" fill="none" stroke="#333" aria-hidden="true"><rect x=".5" y=".5" width="12" height="9" /><path d="M6.500 0v10M2 2.500h3M2 4.500h3M2 6.500h3M8 2.500h3M8 4.500h3M8 6.500h3" /></svg>
        </button>
        <div className="ml-auto"><ZoomSlider label="Mixer-Zoom" low /></div>
        <div className="w-3.5 border-l border-[#8a8a8a] bg-[#bcbcbc]" />
      </div>
      <nav className="flex h-[19px] shrink-0 text-[9px] font-bold text-[#1c1c1c]">
        {editorTabs.map(([t, w], i) => (
          <button key={t} type="button" className={`${w} border-r border-[#999] ${i ? '' : 'bg-[#a3a8b0]'}`}>{t}</button>
        ))}
      </nav>
    </section>
  );
}

/* ---------- library ---------- */

const patches = [
  '1 (Grand Piano)', '2 (Polysynth)', '3 (Fingered Bs.)', '4 (Muted Gt.)', '5 (Strings)', '6 (Pizzicato Str)', '7 (Brass 1)', '8 (Trumpet)',
  '9 (Reverse Cym.)', '10 (STANDARD Drum)', '11 (DrawOrgan)', '12 (E. Piano1)', '13 (Syn. Strings1)', '14 (Square Wave)', '15 (Saw Wave)', '16 (Soundtrack)',
];
const folders = ['Ableton Live', 'Andere Objekte', 'GM-Gerät', 'LPD8'];

function FolderIcon({ i }: { i: number }) {
  return (
    <svg viewBox="0 0 14 12" className="h-3 w-3.5 shrink-0" aria-hidden="true">
      <path d="M.5 2.500 1.500 1h4l1 1.500h7v9H.5z" fill="#86a3cb" stroke="#40587c" />
      <path d="M1 4h12" stroke="#b4cbe8" />
      {i === 0 && <path d="M3 6l3 1.500L3 9.500M11 6 8 7.500l3 2M5 7.500h4" stroke="#16243c" strokeWidth="1.300" fill="none" />}
      {i >= 2 && <path d="M4 5.500v5M7 5.500v5M10 5.500v5" stroke="#2c3f5e" strokeWidth="1.200" />}
    </svg>
  );
}

function PatchIcon() {
  return (
    <svg viewBox="0 0 13 12" className="h-3 w-[13px] shrink-0" aria-hidden="true">
      <rect x=".5" y=".5" width="12" height="11" fill="#efefef" stroke="#888" />
      <path d="M4.500 1v10M8.500 1v10" stroke="#777" />
      <path d="M4.500 1v6.500M8.500 1v6.500" stroke="#222" strokeWidth="2" />
    </svg>
  );
}

const tabs = [['Bin', 'w-[87px]'], ['Loops', 'w-[91px]'], ['Bibliothek', 'w-[88px]'], ['Übersicht', 'flex-1']];
const scrollCol = 'w-[11px] shrink-0 border-x border-[#8a8a8a] bg-linear-to-r from-[#aaa] to-[#d0d0d0]';

function Library() {
  return (
    <aside className="flex w-[356px] shrink-0 flex-col">
      <div role="tablist" className="flex h-[19px] shrink-0 overflow-hidden rounded-t-md border border-b-0 border-[#8a8a8a] bg-[#a6a6a6] text-[9px] font-bold text-[#1c1c1c]">
        {tabs.map(([t, w]) => {
          const on = t === 'Bibliothek';
          return (
            <button key={t} type="button" role="tab" aria-selected={on} className={`${w} ${on ? 'rounded-t-md border-t border-[#e6e6e6] bg-[#bcbcbc]' : 'border-r border-b border-r-[#8a8a8a] border-b-[#e0e0e0]'}`}>
              {t}
            </button>
          );
        })}
      </div>
      <div className="flex min-h-0 flex-1 flex-col rounded-b-md border border-t-0 border-[#8a8a8a] bg-[#bcbcbc]">
        <div className="px-1.5 pt-2.5 pb-2">
          <div className="flex h-4 items-center gap-0.5 rounded-full border border-[#7d7d7d] border-b-[#e2e2e2] bg-[#cbcbcb] pl-1.5">
            <svg viewBox="0 0 14 10" className="h-2.5 w-3.5" fill="none" stroke="#333" strokeWidth="1.500" aria-hidden="true"><circle cx="4" cy="4" r="3" /><path d="m6 6 3 3.500" /><path d="M9 4h4l-2 2.500z" fill="#333" stroke="none" /></svg>
            <input type="search" aria-label="Bibliothek durchsuchen" placeholder="Bibliothek durchsuchen" className="min-w-0 flex-1 bg-transparent text-[9px] leading-3 font-bold outline-none placeholder:text-[#777]" />
          </div>
        </div>
        <div className="flex min-h-0 flex-1 border-t border-b border-[#8a8a8a]">
          <ul className="flex-1">
            {folders.map((f, i) => (
              <li key={f}>
                <button type="button" className={`flex h-[18px] w-full items-center gap-0.5 px-[5px] text-[11px] text-[#1a1a1a] ${i === 2 ? 'bg-[#999]' : ''}`}>
                  <FolderIcon i={i} />
                  {f}
                  {i === 2 ? (
                    <Triangle dir="right" className="ml-auto size-[7px]" />
                  ) : (
                    <svg viewBox="0 0 7 7" className="ml-auto size-[7px]" fill="#c9c9c9" stroke="#999" strokeWidth=".8" aria-hidden="true"><path d="M.5.5v6l6-3z" /></svg>
                  )}
                </button>
              </li>
            ))}
          </ul>
          <div className={scrollCol} />
          <ul className="w-[167px]">
            {patches.map((p, i) => (
              <li key={p}>
                <button type="button" className={`flex h-[18px] w-full items-center gap-[3px] pl-2 text-[11px] text-[#1a1a1a] ${i ? '' : 'bg-[#999]'}`}>
                  <PatchIcon />
                  {p}
                </button>
              </li>
            ))}
          </ul>
          <div className={scrollCol} />
        </div>
        <div className="h-[11px] shrink-0 border-b border-[#8a8a8a] bg-[#c4c4c4]" />
        <div className="flex h-8 shrink-0 items-center justify-between px-1.5">
          <button type="button" aria-label="Aktionen" className="flex h-[15px] w-[34px] items-center justify-center gap-1.5 rounded-xs border border-[#808080] bg-[#d6d6d6]">
            <svg viewBox="0 0 10 10" className="size-[9px]" aria-hidden="true"><circle cx="5" cy="5" r="2.600" fill="none" stroke="#222" strokeWidth="2" /><path d="M5 0v10M0 5h10M1.500 1.500l7 7M8.500 1.500l-7 7" stroke="#222" strokeWidth="1.200" /><circle cx="5" cy="5" r="1.300" fill="#d6d6d6" /></svg>
            <svg viewBox="0 0 6 5" className="h-[5px] w-1.5" fill="#222" aria-hidden="true"><path d="M0 0h6L3 5z" /></svg>
          </button>
          <button type="button" className="h-[15px] w-[85px] rounded-full border border-[#8a8a8a] text-[9px] leading-[13px] font-bold text-[#666]">Zurücksetzen</button>
        </div>
      </div>
    </aside>
  );
}

/* ---------- transport ---------- */

const transportShapes: [string, React.ReactNode][] = [
  ['Zum Anfang', <><path d="M3 3v10" stroke="#333" strokeWidth="1.500" /><path d="M13 3v10L5 8z" /></>],
  ['Ab Auswahl', <><path d="M1 2.500h13M1 13.500h13" stroke="#444" strokeDasharray="2 .5" /><path d="M10 5.500h4M10 8h4M10 10.500h4M1 5v6" stroke="#555" /><path d="M2.500 4v8L10 8z" /></>],
  ['Zurückspulen', <path d="M8 3v10L.5 8zM15.500 3v10L8 8z" />],
  ['Vorspulen', <path d="M.5 3v10L8 8zM8 3v10l7.500-5z" />],
  ['Stopp', <path d="M3.500 3.500h9v9h-9z" />],
  ['Start', <path d="M4.500 3v10L12.500 8z" />],
  ['Pause', <path d="M4 2.500h3v11H4zM9 2.500h3v11H9z" />],
  ['Aufnahme', <circle cx="8" cy="8" r="4.800" />],
];

const modeShapes: [string, React.ReactNode][] = [
  ['Low Latency', <><path d="M2.500 13.500a7.200 7.200 0 1 1 11 0L12 11q-4-3-8 0z" /><path d="M7 11.500 11.500 4" stroke="#c4c4c4" strokeWidth="1.400" /><circle cx="7.500" cy="11" r="1.500" fill="#c4c4c4" /></>],
  ['Cycle', <><path d="M9 4.500H5.500a3.500 3.500 0 0 0-2 6M7 11.500h3.500a3.500 3.500 0 0 0 2-6" fill="none" stroke="#15461d" strokeWidth="2.400" /><path d="M8.500 1.500v6L12.500 4.500zM7.500 8.500v6L3.500 11.500z" fill="#15461d" /></>],
  ['Autopunch', <><path d="M1.500 11.500 3.500 10v1h9v-1l2 1.500v3h-13z" /><path d="M5 1v5M11 9V4" stroke="#333" strokeWidth="1.500" /><path d="M2.500 5h5L5 9zM8.500 5h5L11 1z" /></>],
  ['Replace', <><rect x="3" y="1.500" width="10" height="13" rx="2.500" /><path d="m5.500 5 5 6M10.500 5l-5 6" stroke="#ccc" strokeWidth="1.400" /></>],
  ['Solo', <><rect x="3" y="1.500" width="10" height="13" rx="1" /><path d="M10.500 5H6.500v3h3.500v3H5.500" stroke="#ccc" strokeWidth="1.400" fill="none" /></>],
  ['Metronom', <><path d="M8.500 1 13 12H4z" /><path d="M2 14h12.500M2 3.500l8 9" stroke="#333" strokeWidth="1.600" /></>],
];

function RoundButton({ label, tone = '', children }: { label: string; tone?: string; children: React.ReactNode }) {
  return (
    <button type="button" aria-label={label} className={`flex size-[26px] items-center justify-center rounded-full border-2 ${tone || 'border-[#868686] bg-linear-to-b from-[#dedede] to-[#b4b4b4]'}`}>
      <svg viewBox="0 0 16 16" className="size-3.5" fill="#333" aria-hidden="true">{children}</svg>
    </button>
  );
}

function Digits({ row }: { row: string[] }) {
  return (
    <div className="flex justify-end">
      {row.map((d, i) => (
        <span key={i} className={`text-right ${i === 3 ? 'w-[29px]' : 'w-[22px]'}`}>{d}</span>
      ))}
    </div>
  );
}

function Transport() {
  const cell = 'flex flex-col justify-center border-r border-[#4a4a4a]';
  const track = 'flex h-[31px] items-center gap-1.5 rounded-full bg-linear-to-b from-[#9c9c9c] to-[#d4d4d4] px-[3px]';
  return (
    <footer className="mx-[7px] mt-2 flex h-[45px] shrink-0 items-center rounded-md border border-[#8a8a8a] border-t-[#f0f0f0] bg-linear-to-b from-[#d6d6d6] to-[#aeaeae] pl-[281px]">
      <div className={track}>
        {transportShapes.map(([l, s]) => (
          <RoundButton key={l} label={l} tone={l === 'Stopp' ? 'border-[#666e7c] bg-linear-to-b from-[#c3cad6] to-[#8f9aac]' : ''}>{s}</RoundButton>
        ))}
      </div>
      <div className="ml-5 flex h-[37px] w-[546px] rounded-md border-b border-[#e8e8e8] bg-[#2f3030] font-[family-name:'Liberation_Sans',sans-serif] text-[13px] leading-[15px] text-[#cfdcdf]">
        <div className={`${cell} w-[127px] pr-2.5`}>
          <span className="text-right">01 : 00 : 00 : 00.00</span>
          <Digits row={['1', '1', '1', '1']} />
        </div>
        <div className={`${cell} w-[120px] pr-1.5`}>
          <Digits row={['1', '1', '1', '1']} />
          <Digits row={['5', '1', '1', '1']} />
        </div>
        <div className={`${cell} w-[71px] pr-1.5 text-right`}><span>120.0000</span><span>130</span></div>
        <div className={`${cell} w-[50px] text-center`}><span>4/4</span><span className="pl-3">/16</span></div>
        <div className={`${cell} w-[109px] pl-1.5`}>
          <span className="flex items-baseline gap-2">
            <svg viewBox="0 0 6 11" className="h-[11px] w-1.5" fill="#e8eeef" aria-hidden="true"><ellipse cx="2.500" cy="9" rx="2.500" ry="2" /><path d="M4 0h1v9H4z" /></svg>
            <span>1</span><span>C3</span><span>_90</span>
          </span>
          <span className="pl-2">(Ausgang)</span>
        </div>
        <div className="flex flex-1 flex-col justify-center gap-1.5 pl-[7px] text-[7px] leading-2 font-bold text-[#b9c0c2]">
          {['CPU', 'HD'].map((t) => (
            <div key={t} className="flex items-center">
              <span className="w-[15px]">{t}</span>
              <i className="h-2.5 w-[42px] bg-[repeating-linear-gradient(90deg,#292924_0_2px,#31312b_2px_3px)]" />
            </div>
          ))}
        </div>
      </div>
      <div className={`${track} ml-[22px]`}>
        {modeShapes.map(([l, s]) => (
          <RoundButton key={l} label={l} tone={l === 'Cycle' ? 'border-[#2c9c3e] bg-[radial-gradient(circle,#4cc95e,#7dfb8e)]' : ''}>{s}</RoundButton>
        ))}
      </div>
      <div className="mr-[18px] ml-auto flex items-center gap-1 text-[#2a2a2a]">
        <Speaker waves={1} className="-mr-2 h-3 w-[15px]" />
        <input
          type="range"
          aria-label="Masterlautstärke"
          defaultValue={70}
          className="ml-1.5 h-2.5 w-20 appearance-none bg-transparent [&::-webkit-slider-runnable-track]:h-1 [&::-webkit-slider-runnable-track]:rounded-full [&::-webkit-slider-runnable-track]:border [&::-webkit-slider-runnable-track]:border-[#777] [&::-webkit-slider-runnable-track]:bg-[#e0e0e0] [&::-webkit-slider-thumb]:-mt-1 [&::-webkit-slider-thumb]:size-2.5 [&::-webkit-slider-thumb]:appearance-none [&::-webkit-slider-thumb]:rounded-full [&::-webkit-slider-thumb]:border [&::-webkit-slider-thumb]:border-[#666] [&::-webkit-slider-thumb]:bg-[#e9e9e9]"
        />
        <Speaker waves={3} className="h-3 w-[15px]" />
      </div>
    </footer>
  );
}

/* ---------- page ---------- */

function MenuBar() {
  return (
    <header className="flex h-[22px] shrink-0 items-center border-b border-black bg-linear-to-b from-[#fbfbfb] to-[#cfcfcf] pl-5 text-sm leading-[21px] text-[#161616]">
      <FaApple className="mr-[17px] mb-0.5 size-[17px] text-[#333]" />
      <nav className="flex items-center">
        <a href="#app" className="mr-1.5 pr-2 font-bold">Bildschirmfoto</a>
        <a href="#ablage" className="pr-3 pl-2">Ablage</a>
        <a href="#bearbeiten" className="px-2">Bearbeiten</a>
        <a href="#foto" className="ml-0.5 bg-[#2152e8] px-2.5 text-white">Foto</a>
        <a href="#fenster" className="pr-3 pl-2">Fenster</a>
        <a href="#hilfe" className="px-2.5">Hilfe</a>
      </nav>
      <div className="mr-[19px] ml-auto flex items-center">
        <svg viewBox="0 0 20 8" className="mr-1 h-2 w-[18px]" fill="none" stroke="#222" strokeWidth="1.400" aria-hidden="true"><path d="M5 .5 1 4l4 3.500M15 .5 19 4l-4 3.500M7 4h1.500M11 4h1.500" /></svg>
        <span className="text-[13px]">04:12:31</span>
        <svg viewBox="0 0 22 16" className="ml-2.5 h-4 w-[22px]" fill="#eee" stroke="#999" aria-hidden="true"><path d="M11 15 1 5.500Q11-3.500 21 5.500z" /></svg>
        <History className="ml-2.5 size-[17px]" strokeWidth={2} />
        <FaEject className="ml-3.5 size-[13px]" />
        <Speaker waves={3} className="ml-3.5 h-[15px] w-[19px]" />
        <svg viewBox="0 0 16 16" className="ml-3 size-4" fill="none" stroke="#222" aria-hidden="true"><path d="M1 3h14v12H1z" strokeWidth="1.500" /><path d="M1 3h14" strokeWidth="3.500" /><path d="M5.500 6v6M3 7.500l5 3M8 7.500l-5 3" /><path d="M10 7h4M10 9.500h4M10 12h4" strokeDasharray="1 .5" /></svg>
        <span className="ml-3 text-[15px]">So. 23. Sep</span>
        <span className="ml-2.5 text-[15px]">17 44 48</span>
        <Search className="ml-4 size-4" strokeWidth={2.400} />
      </div>
    </header>
  );
}

export default function App() {
  return (
    <div className="flex min-h-screen flex-col bg-black pb-1 font-[family-name:'DejaVu_Sans_Condensed','Open_Sans',sans-serif]">
      <MenuBar />
      <div className="flex flex-1 flex-col rounded-t-lg rounded-b-sm bg-[#a9a9a9] bg-linear-to-b from-[#d9d9d9] via-[#b2b2b2] via-[80px] to-[#a9a9a9] to-[120px] pb-2">
        <div className="grid h-5 shrink-0 grid-cols-[1fr_auto_1fr] items-center border-b border-[#9c9c9c] px-[7px]">
          <div className="flex gap-1.5">
            {['Schließen', 'Minimieren', 'Zoomen'].map((l, i) => (
              <button key={l} type="button" aria-label={l} className="flex size-3.5 items-center justify-center rounded-full border border-[#808080] bg-linear-to-b from-[#a8a8a8] to-[#ececec]">
                {i === 0 && <i className="size-1.5 rounded-full bg-[#555]" />}
              </button>
            ))}
          </div>
          <h1 className="text-sm leading-5 text-[#6a6a6a]">Ohne Titel – Arrangierfenster</h1>
          <button type="button" aria-label="Symbolleiste" className="h-2.5 w-5 justify-self-end rounded-full border border-[#888] bg-[#cfcfcf]" />
        </div>
        <div className="flex h-[55px] shrink-0 justify-between pt-[7px] pr-2 pl-[7px]">
          <ToolGroup items={toolsLeft} />
          <ToolGroup items={toolsRight} />
        </div>
        <main className="flex min-h-0 flex-1 gap-2 px-[7px]">
          <Inspector />
          <div className="flex min-w-0 flex-1 flex-col gap-2">
            <Arrange />
            <Mixer />
          </div>
          <Library />
        </main>
        <Transport />
      </div>
    </div>
  );
}
